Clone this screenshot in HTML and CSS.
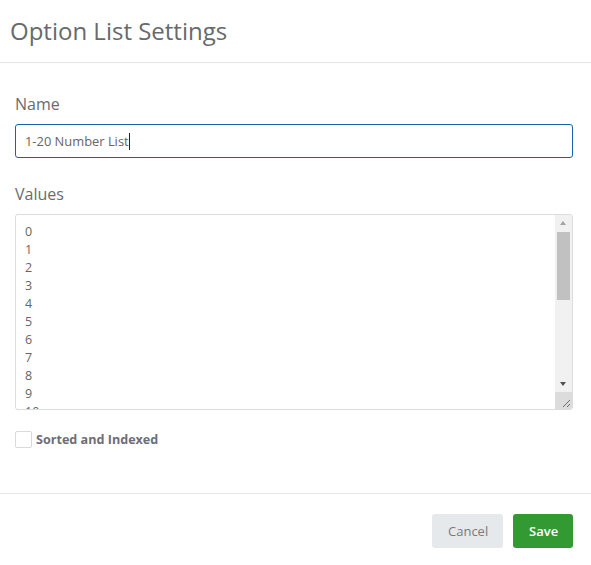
FILE: index.html
```html
<!DOCTYPE html>
<html>
<head>
<meta charset="utf-8">
<link rel="stylesheet" href="styles.css">
</head>
<body>
<div class="modal">
  <div class="modal-header"><h1 class="title">Option List Settings</h1></div>
  <div class="modal-body">
    <div class="field">
      <label class="label">Name</label>
      <div class="input"><span>1-20 Number List</span><span class="caret"></span></div>
    </div>
    <div class="field field-values">
      <label class="label">Values</label>
      <div class="textarea">
        <div class="lines">
          <div>0</div><div>1</div><div>2</div><div>3</div><div>4</div><div>5</div><div>6</div><div>7</div><div>8</div><div>9</div><div>10</div>
        </div>
        <div class="scrollbar">
          <div class="arrow up"></div>
          <div class="track"><div class="thumb"></div></div>
          <div class="arrow down"></div>
          <div class="resizer">
            <svg width="17" height="17" viewBox="0 0 17 17"><path d="M15 8 L8 15 M15 12 L12 15" stroke="#6e6e6e" stroke-width="1"/></svg>
          </div>
        </div>
      </div>
    </div>
    <div class="check-row">
      <span class="checkbox"></span>
      <span class="check-label">Sorted and Indexed</span>
    </div>
  </div>
  <div class="modal-footer">
    <button class="btn btn-cancel">Cancel</button>
    <button class="btn btn-save">Save</button>
  </div>
</div>
</body>
</html>
```
FILE: styles.css
```css
* { box-sizing: border-box; }
html, body { margin: 0; padding: 0; background: #fff; }
body { font-family: "Open Sans", "Noto Sans", sans-serif; color: #666; width: 591px; }
.modal { width: 591px; }
.modal-header { padding: 15px 10px; border-bottom: 1px solid #e5e5e5; }
.title { margin: 0; font-size: 24px; font-weight: 400; line-height: 32px; color: #676a6c; }
.modal-body { padding: 30px 18px 45px 15px; }
.field { display: flex; flex-direction: column; }
.label { font-size: 16px; line-height: 22px; color: #6b6b6b; margin-bottom: 9px; }
.input { height: 34px; border: 1px solid #1c5fae; border-radius: 3px; padding: 0 9px; display: flex; align-items: center; font-size: 12.9px; color: #666; }
.caret { display: inline-block; width: 1px; height: 17px; background: #222; margin-left: 0; }
.field-values { margin-top: 25px; }
.textarea { height: 196px; border: 1px solid #dcdcdc; border-radius: 3px; display: flex; overflow: hidden; }
.lines { flex: 1; padding: 8px 9px; font-size: 12.5px; line-height: 18px; color: #666; overflow: hidden; }
.scrollbar { width: 17px; background: #f1f1f1; display: flex; flex-direction: column; }
.arrow { height: 17px; position: relative; }
.arrow::after { content: ""; position: absolute; left: 5px; border-left: 3.5px solid transparent; border-right: 3.5px solid transparent; }
.arrow.up::after { top: 6px; border-bottom: 4px solid #a3a3a3; }
.arrow.down::after { top: 7px; border-top: 4px solid #505050; }
.track { flex: 1; padding: 0 2px; }
.thumb { height: 68px; background: #c1c1c1; }
.resizer { height: 17px; background: #dcdcdc; }
.resizer svg { display: block; }
.check-row { margin-top: 21px; display: flex; align-items: center; gap: 4px; }
.checkbox { width: 17px; height: 17px; border: 1px solid #d9d9d9; border-radius: 2px; background: #fff; }
.check-label { font-size: 12.6px; font-weight: 700; color: #6b6e7a; }
.modal-footer { border-top: 1px solid #e5e5e5; padding: 20px 18px 18px; display: flex; justify-content: flex-end; gap: 10px; }
.btn { height: 34px; border: none; border-radius: 3px; font-family: "Open Sans", sans-serif; font-size: 13px; padding: 0 16px; }
.btn-cancel { background: #e6e9eb; color: #7a7a7a; width: 71px; }
.btn-save { background: #339933; color: #fff; width: 60px; font-weight: 600; }
```
